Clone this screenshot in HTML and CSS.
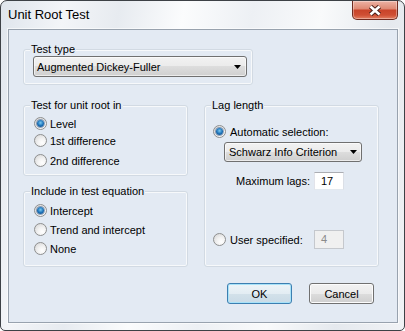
FILE: index.html
```html
<!DOCTYPE html>
<html lang="en">
<head>
    <meta charset="UTF-8">
    <title>Unit Root Test</title>
    <link rel="stylesheet" href="styles.css">
</head>
<body>
    <div class="window">
        <div class="titlebar">
            <span class="title">Unit Root Test</span>
            <button class="close" type="button">
                <svg width="16" height="11" viewBox="0 0 16 11">
                    <path d="M3.5 1.5 L12.5 9.5 M12.5 1.5 L3.5 9.5" stroke="#4b2019" stroke-width="4.6" fill="none"/>
                    <path d="M3.5 1.5 L12.5 9.5 M12.5 1.5 L3.5 9.5" stroke="#ffffff" stroke-width="2.6" fill="none"/>
                </svg>
            </button>
        </div>

        <div class="client">
            <fieldset class="group group-type">
                <legend>Test type</legend>
                <div class="group-body">
                    <div class="combo combo-type">
                        <span>Augmented Dickey-Fuller</span>
                        <svg class="arrow" width="7" height="4" viewBox="0 0 7 4"><polygon points="0,0 7,0 3.5,4" fill="#000"/></svg>
                    </div>
                </div>
            </fieldset>

            <div class="columns">
                <div class="col-left">
                    <fieldset class="group group-root">
                        <legend>Test for unit root in</legend>
                        <div class="group-body">
                            <div class="radio-row"><span class="radio checked"></span><span>Level</span></div>
                            <div class="radio-row"><span class="radio"></span><span>1st difference</span></div>
                            <div class="radio-row spaced"><span class="radio"></span><span>2nd difference</span></div>
                        </div>
                    </fieldset>

                    <fieldset class="group group-eq">
                        <legend>Include in test equation</legend>
                        <div class="group-body">
                            <div class="radio-row"><span class="radio checked"></span><span>Intercept</span></div>
                            <div class="radio-row"><span class="radio"></span><span>Trend and intercept</span></div>
                            <div class="radio-row"><span class="radio"></span><span>None</span></div>
                        </div>
                    </fieldset>
                </div>

                <fieldset class="group group-lag">
                    <legend>Lag length</legend>
                    <div class="group-body">
                        <div class="radio-row"><span class="radio checked"></span><span>Automatic selection:</span></div>
                        <div class="combo combo-lag">
                            <span>Schwarz Info Criterion</span>
                            <svg class="arrow" width="7" height="4" viewBox="0 0 7 4"><polygon points="0,0 7,0 3.5,4" fill="#000"/></svg>
                        </div>
                        <div class="field-row max-row">
                            <span class="field-label">Maximum lags:</span>
                            <span class="field">17</span>
                        </div>
                        <div class="radio-row user-row">
                            <span class="radio"></span>
                            <span class="field-label user-label">User specified:</span>
                            <span class="field field-disabled">4</span>
                        </div>
                    </div>
                </fieldset>
            </div>

            <div class="buttons">
                <button class="btn btn-default" type="button">OK</button>
                <button class="btn" type="button">Cancel</button>
            </div>
        </div>
    </div>
</body>
</html>
```

FILE: styles.css
```css
* {
    box-sizing: border-box;
}

body {
    margin: 0;
    font-family: 'Liberation Sans', Arial, sans-serif;
    font-size: 11px;
    color: #000;
    background: #fff;
}

.window {
    width: 405px;
    height: 331px;
    border: 1px solid #3d4146;
    border-radius: 7px 7px 5px 5px;
    background: linear-gradient(100deg, #dfe5ec 0%, #f3f5f8 14%, #e7ebf0 26%, #fbfcfd 40%, #edf0f4 55%, #f9fafb 70%, #e5e9ee 85%, #f1f3f6 100%);
    display: flex;
    flex-direction: column;
    overflow: hidden;
}

.titlebar {
    height: 28px;
    display: flex;
    align-items: flex-start;
    padding-left: 7px;
}

.title {
    font-size: 13px;
    line-height: 15px;
    margin-top: 6px;
}

.close {
    margin-left: auto;
    margin-right: 6px;
    width: 46px;
    height: 19px;
    padding: 0;
    border: 1px solid #6f2b20;
    border-top: none;
    border-radius: 0 0 5px 5px;
    background: linear-gradient(#ecb3a5 0%, #df8a75 42%, #c9442a 52%, #cf4f34 78%, #e37f62 100%);
    box-shadow: inset 0 0 0 1px rgba(255, 255, 255, 0.35);
    display: flex;
    align-items: center;
    justify-content: center;
}

.client {
    flex: 1;
    margin: 0 6px 7px 7px;
    border: 1px solid #98a2ae;
    background: #e3eaf3;
    padding: 12px 0 0 14px;
    box-shadow: 0 0 0 1px rgba(255, 255, 255, 0.6);
}

/* group boxes */
.group {
    margin: 0;
    padding: 0;
    min-width: 0;
    border: 1px solid #d2dae3;
    border-radius: 3px;
    box-shadow: inset 0 0 0 1px #f7f9fb;
}

.group legend {
    margin-left: 6px;
    padding: 0 1px;
    line-height: 14px;
    background: #e3eaf3;
}

.group-type {
    width: 230px;
}

.group-type .group-body {
    padding: 0 5px 7px 9px;
}

.columns {
    display: flex;
    gap: 16px;
    margin-top: 13px;
}

.col-left {
    width: 165px;
    display: flex;
    flex-direction: column;
    gap: 8px;
}

.group-root .group-body {
    padding: 3px 0 6px 10px;
}

.group-root .radio-row {
    height: 17px;
}

.group-root .radio-row.spaced {
    margin-top: 3px;
}

.group-eq .group-body {
    padding: 3px 0 8px 10px;
}

.group-lag {
    width: 175px;
}

.group-lag .group-body {
    padding: 10px 0 0 8px;
}

.group-lag .radio-row {
    gap: 4px;
}

/* radios */
.radio-row {
    height: 19px;
    display: flex;
    align-items: center;
    gap: 3px;
}

.radio {
    flex: none;
    width: 13px;
    height: 13px;
    border-radius: 50%;
    border: 1px solid #8e8f8f;
    background: radial-gradient(circle at 65% 70%, #ffffff 0%, #f2f2f2 40%, #d2d2d2 100%);
    display: flex;
    align-items: center;
    justify-content: center;
}

.radio.checked::after {
    content: "";
    width: 7px;
    height: 7px;
    border-radius: 50%;
    background: radial-gradient(circle at 50% 40%, #7ccbf2 0%, #1f74ba 50%, #0e3f76 100%);
    box-shadow: 0 0 0 1px rgba(20, 60, 110, 0.45);
}

/* combo boxes */
.combo {
    height: 21px;
    display: flex;
    align-items: center;
    justify-content: space-between;
    padding-left: 3px;
    border: 1px solid #707070;
    border-radius: 3px;
    background: linear-gradient(#f2f2f2 0%, #ebebeb 50%, #dddddd 50%, #cfcfcf 100%);
    box-shadow: inset 0 0 0 1px rgba(255, 255, 255, 0.6);
}

.combo .arrow {
    margin-right: 5px;
}

.combo-type {
    width: 214px;
}

.combo-lag {
    width: 138px;
    height: 20px;
    margin: 1px 0 0 11px;
    padding-left: 4px;
}

.combo-lag .arrow {
    margin-right: 4px;
}

/* text fields */
.field-row {
    display: flex;
    align-items: center;
}

.max-row {
    margin: 10px 0 0 23px;
}

.field-label {
    width: 78px;
}

.user-row {
    margin-top: 40px;
}

.user-label {
    width: 80px;
}

.field {
    width: 30px;
    height: 18px;
    line-height: 16px;
    padding-left: 6px;
    border: 1px solid #abadb3;
    border-color: #abadb3 #dbdfe6 #e3e9ef #e2e3ea;
    background: #fff;
}

.field-disabled {
    height: 19px;
    line-height: 17px;
    border-color: #c5c8cd;
    background: #f0f0f0;
    color: #8a8a8a;
}

/* buttons */
.buttons {
    display: flex;
    justify-content: flex-end;
    gap: 17px;
    margin-top: 16px;
    padding-right: 23px;
}

.btn {
    width: 65px;
    height: 21px;
    padding: 0;
    font: inherit;
    color: #000;
    border: 1px solid #707070;
    border-radius: 3px;
    background: linear-gradient(#f2f2f2 0%, #ebebeb 50%, #dddddd 50%, #cfcfcf 100%);
    box-shadow: inset 0 0 0 1px #fcfcfc;
}

.btn-default {
    border-color: #3c7fb1;
    background: linear-gradient(#edf4f8 0%, #e3edf3 50%, #d3e1ea 50%, #c9dbe6 100%);
    box-shadow: inset 0 0 0 1px #a8e2f8;
}
```
